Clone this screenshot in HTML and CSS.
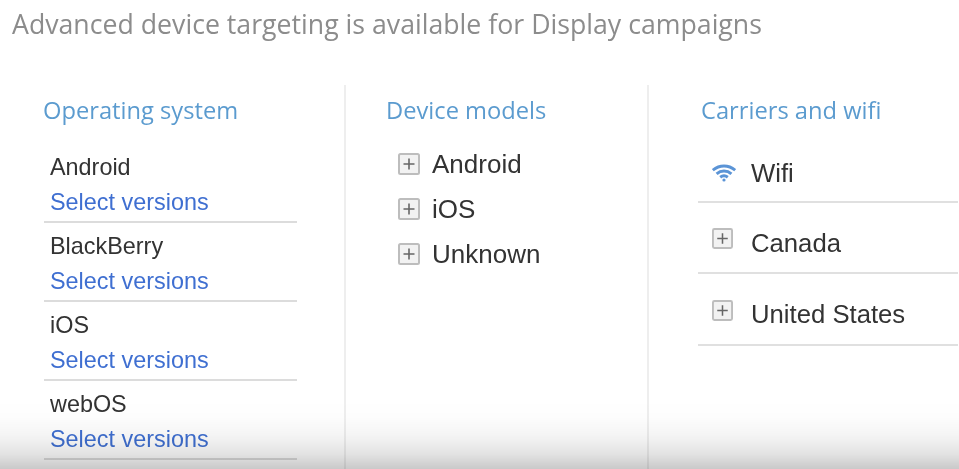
FILE: index.html
```html
<!DOCTYPE html>
<html lang="en">
<head>
<meta charset="utf-8">
<title>Advanced device targeting</title>
<link rel="stylesheet" href="styles.css">
</head>
<body>
<main class="slide">
  <h1 class="headline">Advanced device targeting is available for Display campaigns</h1>
  <div class="columns">
    <section class="col col-os">
      <h2 class="col-title">Operating system</h2>
      <ul class="os-list">
        <li class="os-item"><span class="name">Android</span><a class="link">Select versions</a></li>
        <li class="os-item"><span class="name">BlackBerry</span><a class="link">Select versions</a></li>
        <li class="os-item"><span class="name">iOS</span><a class="link">Select versions</a></li>
        <li class="os-item"><span class="name">webOS</span><a class="link">Select versions</a></li>
      </ul>
    </section>
    <section class="col col-models">
      <h2 class="col-title">Device models</h2>
      <ul class="tree">
        <li class="tree-item"><svg class="plus" viewBox="0 0 22 22"><rect x="1" y="1" width="20" height="20" rx="1.5"/><path d="M5.5 11h11M11 5.5v11"/></svg><span class="label">Android</span></li>
        <li class="tree-item"><svg class="plus" viewBox="0 0 22 22"><rect x="1" y="1" width="20" height="20" rx="1.5"/><path d="M5.5 11h11M11 5.5v11"/></svg><span class="label">iOS</span></li>
        <li class="tree-item"><svg class="plus" viewBox="0 0 22 22"><rect x="1" y="1" width="20" height="20" rx="1.5"/><path d="M5.5 11h11M11 5.5v11"/></svg><span class="label">Unknown</span></li>
      </ul>
    </section>
    <section class="col col-carriers">
      <h2 class="col-title">Carriers and wifi</h2>
      <ul class="carriers">
        <li class="carrier carrier-wifi"><svg class="wifi" viewBox="0 0 24 18"><path d="M0.8 6.2C7.5 0.6 16.5 0.6 23.2 6.2M4.6 9.8C9 6 15 6 19.4 9.8M8.2 13.2C10.4 11.5 13.6 11.5 15.8 13.2"/><circle cx="12" cy="16" r="1.6"/></svg><span class="label">Wifi</span></li>
        <li class="carrier"><svg class="plus small" viewBox="0 0 22 22"><rect x="1" y="1" width="20" height="20" rx="1.5"/><path d="M5.5 11h11M11 5.5v11"/></svg><span class="label">Canada</span></li>
        <li class="carrier"><svg class="plus small" viewBox="0 0 22 22"><rect x="1" y="1" width="20" height="20" rx="1.5"/><path d="M5.5 11h11M11 5.5v11"/></svg><span class="label">United States</span></li>
      </ul>
    </section>
  </div>
  <div class="fade"></div>
</main>
</body>
</html>
```

FILE: styles.css
```css
* { box-sizing: border-box; }
html, body { margin: 0; padding: 0; background: #fff; }
body { width: 959px; height: 469px; overflow: hidden; }
ul { list-style: none; margin: 0; padding: 0; }
.slide { position: relative; width: 959px; height: 469px; overflow: hidden; filter: blur(0.45px); }
.headline { margin: 0; padding: 6px 0 0 12px; height: 85px; font: 400 26.7px/35px "Open Sans", sans-serif; color: #8c8c8c; white-space: nowrap; }
.columns { display: grid; grid-template-columns: 346px 303px 310px; height: 384px; }
.col { border-right: 2px solid #eeeeee; }
.col-carriers { border-right: 0; }
.col-title { margin: 0; font: 400 23.7px/30px "Open Sans", sans-serif; color: #5b9bcf; white-space: nowrap; }
.col-os { padding: 10px 47px 0 44px; }
.col-os .col-title { margin-left: -1px; }
.col-models { padding: 10px 0 0 40px; }
.col-carriers { padding: 10px 1px 0 52px; }
.os-list { margin-top: 19px; }
.os-item { display: flex; flex-direction: column; height: 79px; padding: 6px 0 0 6px; border-bottom: 2px solid #dcdcdc; font: 400 23.4px/35px "Liberation Sans", sans-serif; }
.os-item .name { height: 35px; color: #333; }
.link { color: #3f6fd1; }
.tree { margin-top: 16px; padding-left: 12px; }
.tree-item { display: flex; align-items: center; height: 45px; }
.plus { width: 22px; height: 22px; flex: none; }
.plus rect { fill: #f2f2f2; stroke: #bdbdbd; stroke-width: 2; }
.plus path { fill: none; stroke: #666; stroke-width: 1.6; }
.label { font: 400 26px/30px "Liberation Sans", sans-serif; color: #333; white-space: nowrap; }
.tree-item .label { margin-left: 12px; }
.carriers { margin-top: 15px; margin-left: -3px; }
.carrier { display: flex; align-items: center; height: 71px; padding: 10px 0 0 14px; border-bottom: 2px solid #e0e0e0; }
.carrier:last-child { height: 72px; }
.carrier-wifi { height: 63px; padding-top: 4px; }
.carrier .label { margin-left: 15px; font-size: 25.7px; }
.carrier .plus.small { margin-top: -8px; margin-right: 3px; width: 21px; height: 21px; }
.wifi { width: 24px; height: 18px; flex: none; }
.wifi path { fill: none; stroke: #5b94d6; stroke-width: 3; }
.wifi circle { fill: #5b94d6; }
.fade { position: absolute; left: 0; right: 0; bottom: 0; height: 69px; background: linear-gradient(to bottom, rgba(0,0,0,0), rgba(0,0,0,0.008) 25%, rgba(0,0,0,0.045) 52%, rgba(0,0,0,0.11) 78%, rgba(0,0,0,0.21)); pointer-events: none; }
```
